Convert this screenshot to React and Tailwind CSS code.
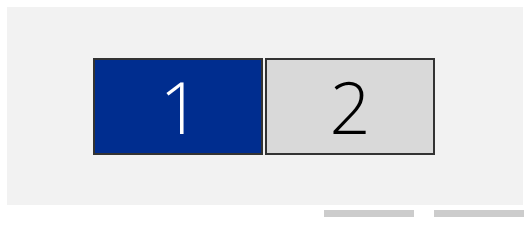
export default function App() {
  return (
    <div className="h-[217px] overflow-hidden bg-white pt-[7px] pl-[7px]" style={{ fontFamily: '"Open Sans", "Liberation Sans", sans-serif' }}>
      {/* arrangement canvas */}
      <div className="w-[516px] h-[198px] bg-[#f2f2f2] flex items-center justify-center">
        <div className="flex gap-[2px] ml-[-2px]">
          <div className="w-[170px] h-[97px] border-2 border-[#333333] bg-[#002d8f] flex items-center justify-center">
            <span className="text-white text-[72px] font-light leading-none pl-[4px]">1</span>
          </div>
          <div className="w-[170px] h-[97px] border-2 border-[#333333] bg-[#d9d9d9] flex items-center justify-center">
            <span className="text-black text-[72px] font-light leading-none">2</span>
          </div>
        </div>
      </div>

      {/* Identify / Detect buttons */}
      <div className="w-[517px] flex justify-end gap-[20px] mt-[5px]">
        <button className="w-[90px] h-[32px] bg-[#cccccc]" />
        <button className="w-[90px] h-[32px] bg-[#cccccc]" />
      </div>
    </div>
  );
}
